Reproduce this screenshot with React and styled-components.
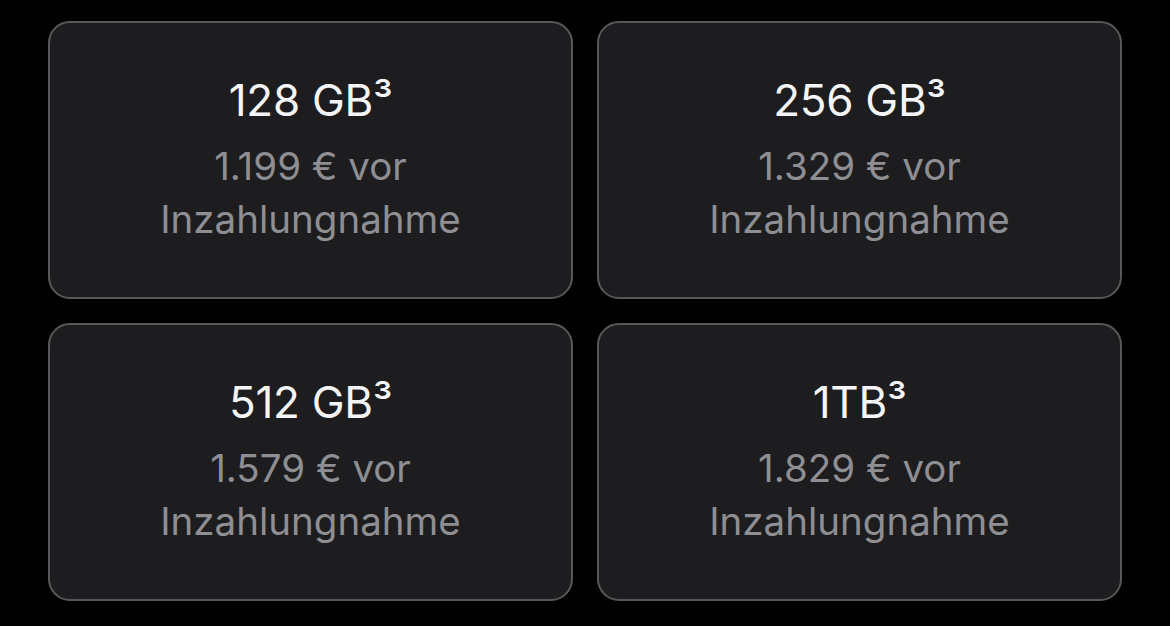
import React from 'react';
import styled, {createGlobalStyle} from 'styled-components';

const GlobalStyle = createGlobalStyle`
  html, body {
    margin: 0;
    padding: 0;
    background: #000;
  }
  body {
    font-family: Inter, "Noto Sans", sans-serif;
    -webkit-font-smoothing: antialiased;
  }
`;

const Page = styled.main`
  width: 1170px;
  height: 626px;
  box-sizing: border-box;
  padding: 21px 48px 0 48px;
  background: #000;
`;

const Grid = styled.div`
  display: grid;
  grid-template-columns: repeat(2, 525px);
  grid-auto-rows: 278px;
  column-gap: 24px;
  row-gap: 24px;
`;

const Card = styled.button`
  box-sizing: border-box;
  display: flex;
  flex-direction: column;
  align-items: center;
  justify-content: center;
  padding: 0 0 2px;
  background: #1d1d1f;
  border: 2.5px solid #58585b;
  border-radius: 22px;
  font-family: inherit;
  cursor: pointer;
`;

const Capacity = styled.div`
  color: #f5f5f7;
  font-size: 44px;
  font-weight: 400;
  line-height: 56px;
  letter-spacing: -0.3px;
`;

const Price = styled.div`
  margin-top: 12px;
  max-width: 340px;
  color: #8e8e93;
  font-size: 38.5px;
  font-weight: 400;
  line-height: 53px;
  letter-spacing: 0;
  text-align: center;
`;

const options = [
  {capacity: '128 GB³', price: '1.199 €'},
  {capacity: '256 GB³', price: '1.329 €'},
  {capacity: '512 GB³', price: '1.579 €'},
  {capacity: '1TB³', price: '1.829 €'},
];

export default function App() {
  return (
    <Page>
      <GlobalStyle />
      <Grid>
        {options.map((o) => (
          <Card key={o.capacity}>
            <Capacity>{o.capacity}</Capacity>
            <Price>{o.price} vor Inzahlungnahme</Price>
          </Card>
        ))}
      </Grid>
    </Page>
  );
}
